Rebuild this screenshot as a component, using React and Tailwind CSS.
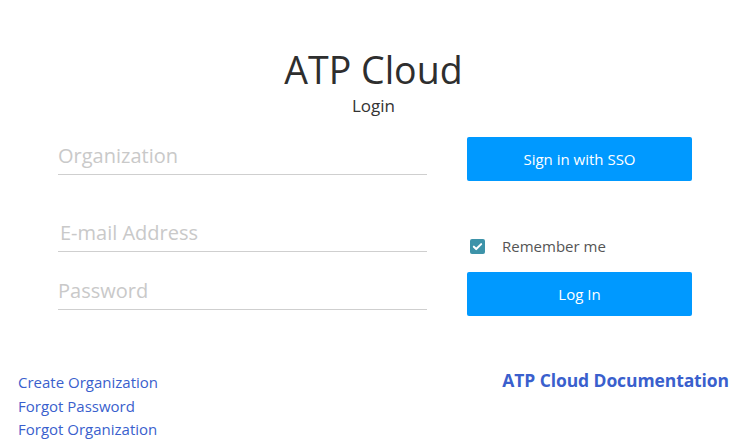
import React, { useState } from 'react';

function UnderlineInput({ placeholder, type = 'text', className = '' }) {
  return (
    <input
      type={type}
      placeholder={placeholder}
      className={`block w-full h-[39px] border-b border-[#cfcfcf] bg-transparent text-[20px] text-[#555] placeholder:text-[#c9c9c9] outline-none ${className}`}
    />
  );
}

export default function App() {
  const [remember, setRemember] = useState(true);

  return (
    <div className="w-[741px] h-[447px] bg-white overflow-hidden font-['Open_Sans',sans-serif]">
      <div className="pt-[47px] pl-[6px] flex flex-col items-center">
        <h1 className="text-[37.5px] leading-[46px] text-[#2e2e2e]">ATP Cloud</h1>
        <p className="text-[17px] leading-[22px] text-[#333] mt-[2px]">Login</p>
      </div>

      <div className="flex pl-[58px] mt-[19px]">
        <div className="w-[369px]">
          <UnderlineInput placeholder="Organization" />
          <UnderlineInput placeholder="E-mail Address" className="mt-[38px] pl-[2px]" />
          <UnderlineInput type="password" placeholder="Password" className="mt-[19px]" />
        </div>

        <div className="w-[225px] ml-[40px] mt-[1px]">
          <button className="w-full h-[44px] rounded-[2px] bg-[#0099ff] text-white text-[15px]">
            Sign in with SSO
          </button>
          <label className="flex items-center mt-[57px] pl-[3px] h-[16px] cursor-pointer">
            <span
              onClick={() => setRemember(!remember)}
              className={`w-[15px] h-[15px] rounded-[2px] flex items-center justify-center ${remember ? 'bg-[#3d93a9]' : 'border border-[#999]'}`}
            >
              {remember && (
                <svg width="11" height="11" viewBox="0 0 12 12">
                  <path d="M2 6.2l2.6 2.6L10 3.4" stroke="white" strokeWidth="2.2" fill="none" strokeLinecap="round" strokeLinejoin="round" />
                </svg>
              )}
            </span>
            <span className="ml-[17px] text-[15px] text-[#555]">Remember me</span>
          </label>
          <button className="w-full h-[44px] mt-[18px] rounded-[2px] bg-[#0099ff] text-white text-[15px]">
            Log In
          </button>
        </div>
      </div>

      <div className="flex justify-between pl-[18px] pr-[12px] mt-[55px]">
        <div className="flex flex-col text-[15px] leading-[23.5px] text-[#3a5fcd]">
          <a href="#">Create Organization</a>
          <a href="#">Forgot Password</a>
          <a href="#">Forgot Organization</a>
        </div>
        <a href="#" className="text-[17.5px] leading-[23px] font-bold text-[#3a5fcd] mt-[-2px] tracking-[-0.1px]">
          ATP Cloud Documentation
        </a>
      </div>
    </div>
  );
}
